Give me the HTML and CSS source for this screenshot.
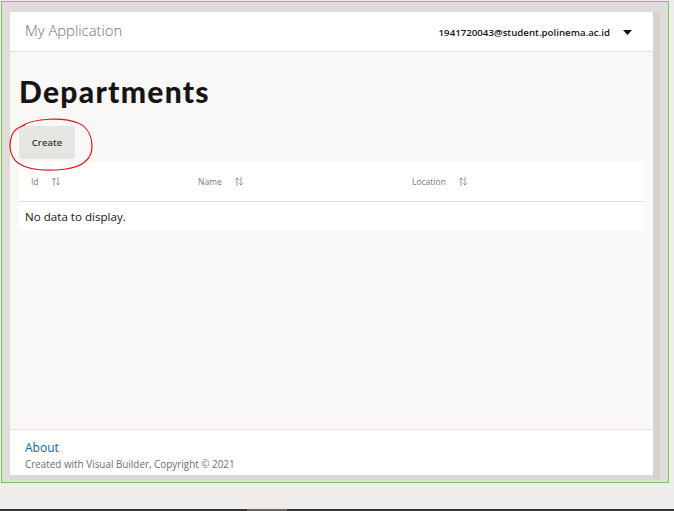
FILE: index.html
```html
<!DOCTYPE html>
<html>
<head>
<meta charset="utf-8">
<link rel="stylesheet" href="styles.css">
</head>
<body>
<div class="desktop">
  <div class="window">
    <div class="app">
      <header class="app-header">
        <span class="app-title">My Application</span>
        <div class="user">
          <span class="user-name">1941720043@student.polinema.ac.id</span>
          <svg class="caret" width="9" height="5" viewBox="0 0 9 5"><path d="M0 0 L9 0 L4.5 5 Z" fill="#111"/></svg>
        </div>
      </header>
      <main class="content">
        <h1 class="page-title">Departments</h1>
        <div class="toolbar">
          <button class="btn">Create</button>
        </div>
        <svg class="scribble" width="88" height="56" viewBox="0 0 88 56"><path d="M14 9 C26 1 56 0 70 6 C80 10 84 20 84 30 C84 42 74 50 58 52 C42 54 22 54 10 46 C2 40 0 28 4 18 C6 13 10 10 17 8" fill="none" stroke="#e3121c" stroke-width="1.2"/></svg>
        <div class="table">
          <div class="thead">
            <div class="th">Id <svg class="sort" width="8" height="9" viewBox="0 0 8 9"><path d="M2 9 V1 M0.3 2.7 L2 1 L3.7 2.7 M6 0 V8 M4.3 6.3 L6 8 L7.7 6.3" fill="none" stroke="#8c8c8c" stroke-width="0.9"/></svg></div>
            <div class="th">Name <svg class="sort" width="8" height="9" viewBox="0 0 8 9"><path d="M2 9 V1 M0.3 2.7 L2 1 L3.7 2.7 M6 0 V8 M4.3 6.3 L6 8 L7.7 6.3" fill="none" stroke="#8c8c8c" stroke-width="0.9"/></svg></div>
            <div class="th">Location <svg class="sort" width="8" height="9" viewBox="0 0 8 9"><path d="M2 9 V1 M0.3 2.7 L2 1 L3.7 2.7 M6 0 V8 M4.3 6.3 L6 8 L7.7 6.3" fill="none" stroke="#8c8c8c" stroke-width="0.9"/></svg></div>
          </div>
          <div class="empty">No data to display.</div>
        </div>
      </main>
      <footer class="app-footer">
        <a class="about" href="#">About</a>
        <span class="copy">Created with Visual Builder, Copyright © 2021</span>
      </footer>
    </div>
  </div>
  <div class="taskbar"><span class="task"></span></div>
</div>
</body>
</html>
```
FILE: styles.css
```css
* { box-sizing: border-box; }
html, body { margin: 0; padding: 0; }
body {
  width: 674px;
  height: 511px;
  overflow: hidden;
  font-family: "Open Sans", "Noto Sans", sans-serif;
  background: #eeedeb;
}
.desktop {
  width: 674px;
  height: 511px;
  display: flex;
  flex-direction: column;
  background: #eeedeb;
}
.window {
  margin: 1px 0 0 1px;
  width: 668px;
  height: 482px;
  border: 1px solid #7dc25b;
  background: #dfddd9;
  padding: 10px 14px 6px 8px;
}
.app {
  width: 643px;
  height: 463px;
  display: flex;
  flex-direction: column;
  background: #f9f8f6;
  box-shadow: 7px 0 0 #d5d3cf, 0 5px 0 #d9d7d3, 7px 5px 0 #d5d3cf;
}
.app-header {
  height: 40px;
  background: #fff;
  border-bottom: 1px solid #e4e3e1;
  display: flex;
  align-items: center;
  justify-content: space-between;
  padding: 0 21px 0 15px;
}
.app-title {
  font-size: 14.8px;
  font-weight: 300;
  color: #6f6f6f;
  margin-top: -4px;
}
.user {
  display: flex;
  align-items: center;
  gap: 13px;
  margin-top: 1px;
}
.user-name {
  font-size: 9.7px;
  font-weight: 600;
  color: #161513;
}
.caret { display: block; }
.content {
  flex: 1;
  position: relative;
  padding: 0 9px;
}
.page-title {
  margin: 0;
  padding-top: 21px;
  font-family: "Lato", sans-serif;
  font-weight: 900;
  font-size: 30px;
  letter-spacing: 1.3px;
  line-height: 36px;
  color: #161513;
}
.toolbar {
  margin-top: 17px;
  display: flex;
}
.btn {
  width: 56px;
  height: 33px;
  border: none;
  border-radius: 3px;
  background: #e6e5e2;
  font-family: "Open Sans", "Noto Sans", sans-serif;
  font-size: 9.5px;
  font-weight: 600;
  color: #3a3936;
  padding: 0;
}
.scribble {
  position: absolute;
  left: -2px;
  top: 65px;
}
.table {
  margin-top: 3px;
  background: #fff;
}
.thead {
  display: grid;
  grid-template-columns: 167px 214px 1fr;
  height: 40px;
  border-bottom: 1px solid #e3e2e0;
}
.th {
  display: flex;
  align-items: center;
  padding-left: 12px;
  gap: 13px;
  font-size: 8.5px;
  color: #7a7a7a;
  margin-top: -1px;
}
.sort { display: block; }
.empty {
  height: 28px;
  display: flex;
  align-items: center;
  padding-left: 6px;
  font-size: 11.6px;
  color: #161513;
}
.app-footer {
  height: 46px;
  background: #fff;
  border-top: 1px solid #e4e3e1;
  display: flex;
  flex-direction: column;
  padding: 10px 15px 0;
}
.about {
  font-size: 12px;
  color: #0a6aa1;
  text-decoration: none;
  line-height: 16px;
}
.copy {
  font-size: 9.9px;
  color: #6f6e6c;
  line-height: 14px;
  margin-top: 1px;
}
.taskbar {
  margin-top: auto;
  height: 2px;
  background: #3b332e;
  position: relative;
}
.task {
  position: absolute;
  left: 247px;
  width: 40px;
  height: 2px;
  background: #6a6460;
}
```
